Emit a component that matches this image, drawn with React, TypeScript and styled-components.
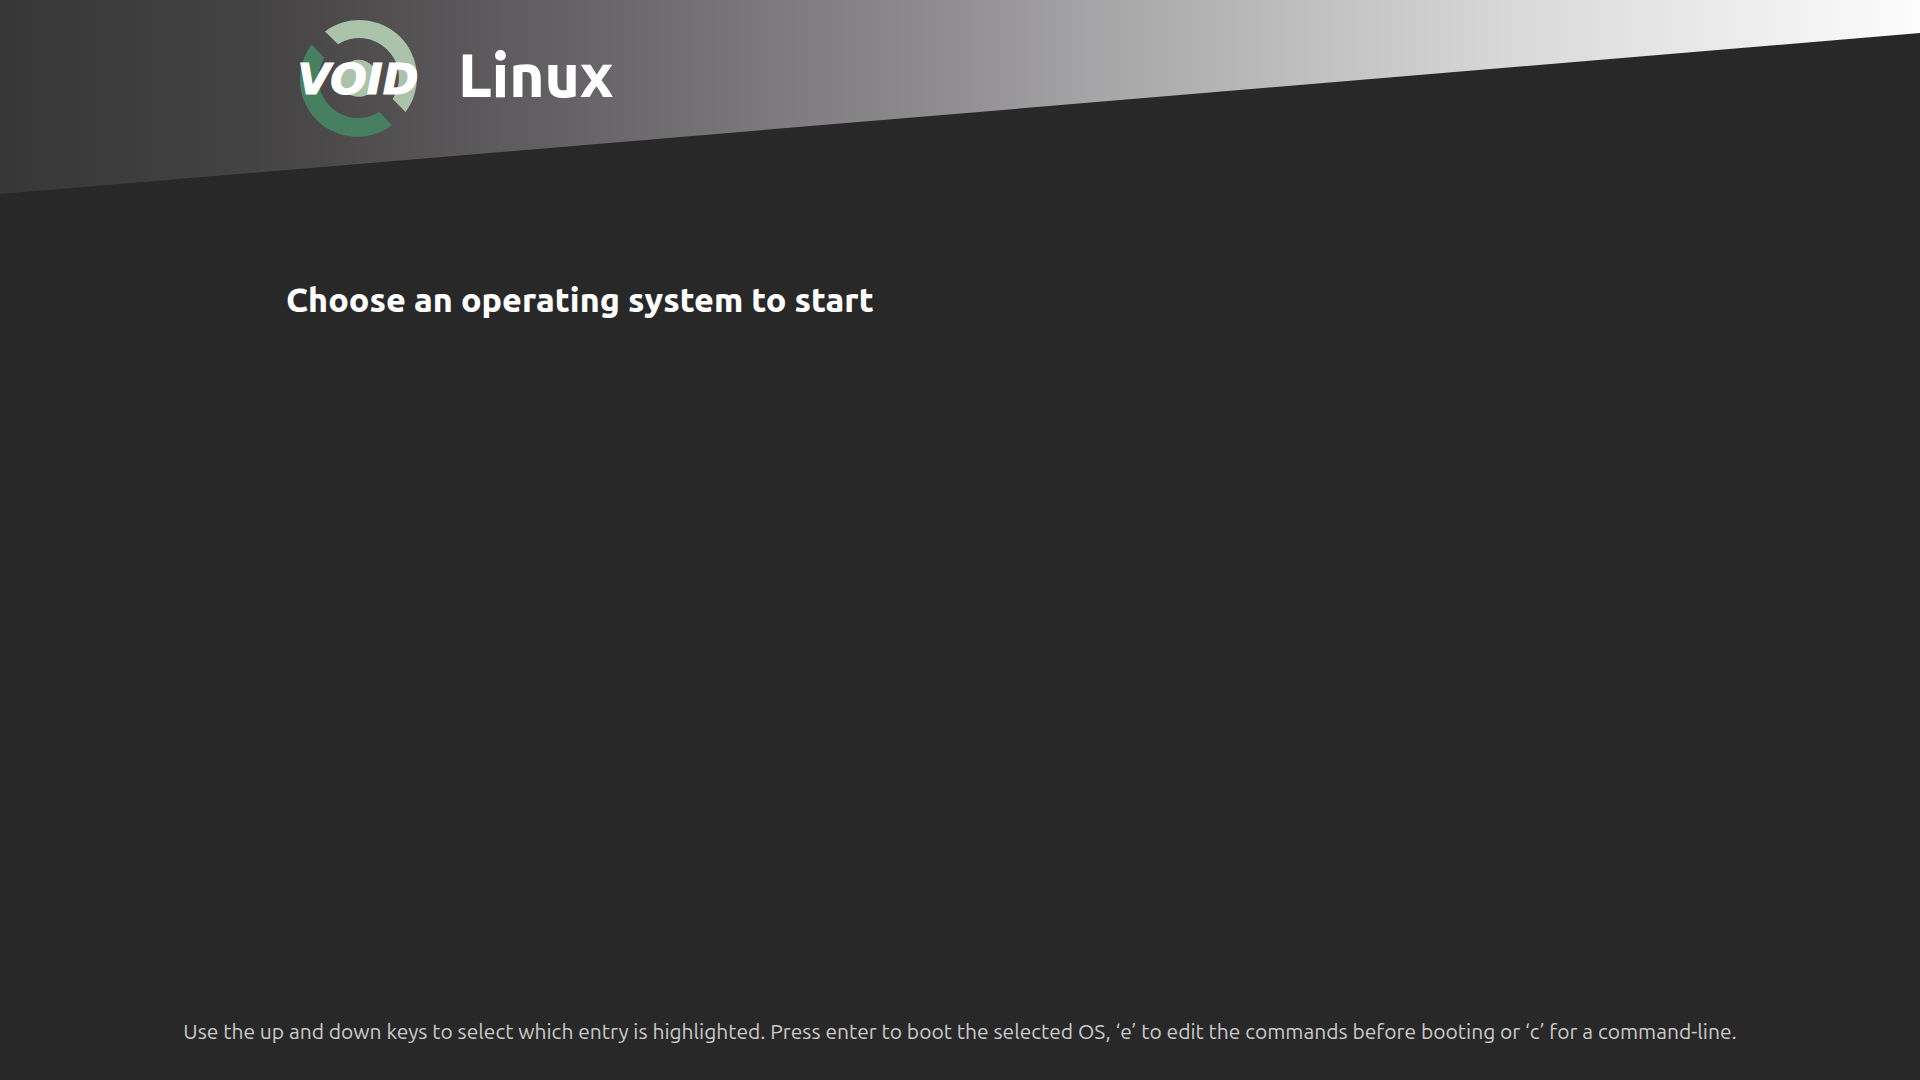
import React from "react";
import styled, { createGlobalStyle } from "styled-components";

const GlobalStyle = createGlobalStyle`
  * { box-sizing: border-box; }
  body {
    margin: 0;
    background: #282828;
    color: #fff;
    font-family: Ubuntu, "Noto Sans", sans-serif;
  }
`;

const Screen = styled.div`
  display: flex;
  flex-direction: column;
  min-height: 100vh;
`;

const Banner = styled.header`
  height: 194px;
  padding: 16px 14.9% 0;
  background: linear-gradient(
    to right,
    #373737 0%,
    #424242 12%,
    #4a4748 16%,
    #656366 30%,
    #918f92 50%,
    #a6a5a7 57%,
    #acacac 60%,
    #d9d9d9 79%,
    #fcfcfc 100%
  );
  clip-path: polygon(0 0, 100% 0, 100% 17%, 0 100%);
`;

const Brand = styled.div`
  display: flex;
  align-items: flex-start;
  gap: 28px;
`;

const LogoArt = styled.svg`
  flex: none;
  width: 144px;
  height: 124px;
`;

const LogoText = styled.text`
  font: italic bold 43px "DejaVu Sans", sans-serif;
  fill: #fff;
  stroke: #fff;
  stroke-width: 1px;
`;

const BrandName = styled.span`
  font-size: 60px;
  font-weight: 800;
  line-height: 118px;
`;

const Main = styled.main`
  flex: 1;
  padding: 80px 14.9% 0;
`;

const Title = styled.h1`
  margin: 0;
  font-size: 34px;
  line-height: 50px;
  font-weight: 800;
`;

const Hint = styled.footer`
  padding: 0 16px 33px;
  color: #cbcbcb;
  font-size: 21px;
  line-height: 32px;
  text-align: center;
`;

function Logo() {
  return (
    <LogoArt viewBox="286 16 144 124" role="img" aria-label="Void">
      <path
        fill="#abc2ab"
        d="M325 31.5A57.5 57.5 0 0 1 405.5 112L392.7 99A39.6 39.6 0 0 0 338 44.3Z"
      />
      <path
        fill="#478061"
        d="M311.7 44.5A57.5 57.5 0 0 0 392 125.3L379.3 112A39.6 39.6 0 0 1 324.3 58Z"
      />
      <circle cx="358.7" cy="78.3" r="18.5" fill="#abc2ab" />
      <LogoText x="358" y="94" textAnchor="middle">
        VOID
      </LogoText>
    </LogoArt>
  );
}

export default function App() {
  return (
    <Screen>
      <GlobalStyle />
      <Banner>
        <Brand>
          <Logo />
          <BrandName>Linux</BrandName>
        </Brand>
      </Banner>
      <Main>
        <Title>Choose an operating system to start</Title>
      </Main>
      <Hint>
        Use the up and down keys to select which entry is highlighted. Press enter to boot the
        selected OS, ‘e’ to edit the commands before booting or ‘c’ for a command-line.
      </Hint>
    </Screen>
  );
}
